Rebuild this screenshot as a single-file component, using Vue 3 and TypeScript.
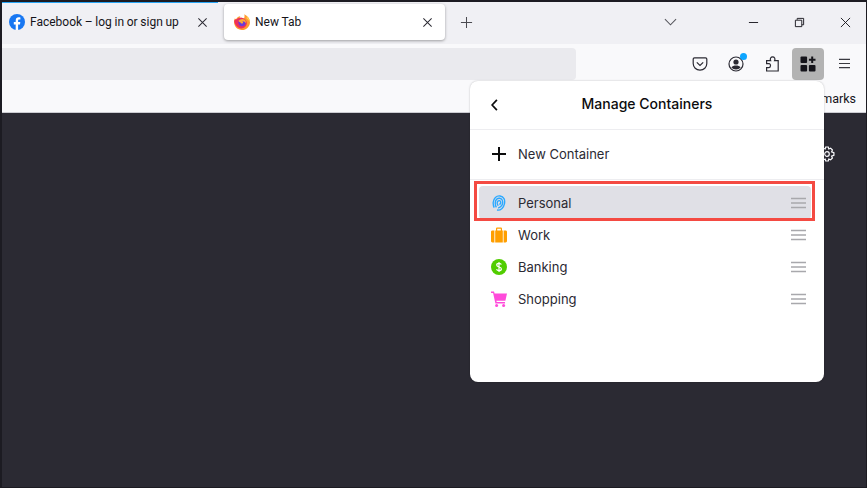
<script setup lang="ts">
/** Data */
const containers = [
    { name: 'Personal', icon: 'fingerprint', active: true },
    { name: 'Work', icon: 'briefcase', active: false },
    { name: 'Banking', icon: 'dollar', active: false },
    { name: 'Shopping', icon: 'cart', active: false }
];
</script>

<template>
    <div class="window">
        <div class="tab-bar">
            <div class="progress"></div>
            <div class="tab">
                <svg class="favicon" viewBox="0 0 16 16">
                    <circle cx="8" cy="8" r="8" fill="#1877f2" />
                    <path d="M6.7 16V10.4H4.8V8H6.7V6.4C6.7 4.4 7.9 3.3 9.7 3.3C10.5 3.3 11.2 3.4 11.4 3.5V5.5H10.3C9.3 5.5 9.1 6 9.1 6.7V8H11.3L11 10.4H9.1V16Z" fill="#fff" />
                </svg>
                <span class="tab-title">Facebook – log in or sign up</span>
                <svg class="tab-close" viewBox="0 0 12 12"><path d="M1.5 1.5L10.5 10.5M10.5 1.5L1.5 10.5" /></svg>
            </div>
            <div class="tab tab-active">
                <svg class="favicon" viewBox="0 0 16 16">
                    <path d="M10.2 0.3C13.8 1.8 16 4.8 16 8.2C16 12.4 12.4 16 8 16C3.6 16 0 12.4 0 8C0 6.6 0.3 5.2 1 4.2C1.2 5 1.6 5.4 2 5.6C2.6 3.6 4.4 2.2 6.4 2.2C5.8 2.8 5.6 3.4 5.7 4C7.2 3.6 8.8 3.8 10 4.6C10.6 3 10.8 1.6 10.2 0.3Z" fill="#ff9a2e" />
                    <path d="M0.2 7C0.8 5.6 1.6 5.2 2.4 5.4C3.4 4.2 6 3.4 8.6 4C11.4 4.6 13 7 12.8 9.6C12.5 12.4 10 14.6 7.2 14.4C3.6 14.2 0.6 11 0.2 7Z" fill="#ed2f5b" />
                    <circle cx="8" cy="8.6" r="3.6" fill="#6a3bd6" />
                    <path d="M4.4 7C5.6 5 8.6 4.4 10.6 5.6C11.8 6.4 12.2 8 11.8 9.2C11.2 7.8 9.8 7 8.2 7.2C9.2 7.6 9.4 8.6 8.8 9.2C8 9.8 6.8 9.4 6.6 8.4C6 8.2 5 7.8 4.4 7Z" fill="#ffa930" />
                    <path d="M12.6 2.2C14.6 3.6 15.8 5.8 15.7 8.2C14.9 6.2 13.8 5 12.4 4.2C12.8 3.6 12.8 2.8 12.6 2.2Z" fill="#ffd34d" />
                </svg>
                <span class="tab-title">New Tab</span>
                <svg class="tab-close" viewBox="0 0 12 12"><path d="M1.5 1.5L10.5 10.5M10.5 1.5L1.5 10.5" /></svg>
            </div>
            <svg class="new-tab" viewBox="0 0 14 14"><path d="M7 1V13M1 7H13" /></svg>
            <div class="tab-bar-right">
                <svg class="tab-list" viewBox="0 0 14 8"><path d="M1 1L7 7L13 1" /></svg>
                <div class="window-controls">
                    <svg class="window-button" viewBox="0 0 12 12"><path d="M1 6H11" /></svg>
                    <svg class="window-button" viewBox="0 0 12 12"><path d="M3.5 3V1.5H10.5V8.5H8.5M1.5 3.5H8.5V10.5H1.5Z" /></svg>
                    <svg class="window-button" viewBox="0 0 12 12"><path d="M1 1L11 11M11 1L1 11" /></svg>
                </div>
            </div>
        </div>

        <div class="toolbar">
            <div class="url-bar"></div>
            <div class="toolbar-icons">
                <svg class="tool" viewBox="0 0 16 16">
                    <path d="M2.5 1.8H13.5C14.3 1.8 14.8 2.4 14.8 3.1V7.4C14.8 11.2 11.8 14.2 8 14.2C4.2 14.2 1.2 11.2 1.2 7.4V3.1C1.2 2.4 1.7 1.8 2.5 1.8Z" />
                    <path d="M4.8 6.4L8 9.4L11.2 6.4" />
                </svg>
                <div class="account">
                    <svg class="tool" viewBox="0 0 16 16">
                        <circle cx="8" cy="8" r="7" />
                        <circle class="solid" cx="8" cy="6" r="2.6" />
                        <path class="solid" d="M3.4 11.6C4.4 10 6 9.6 8 9.6C10 9.6 11.6 10 12.6 11.6C11.4 12.9 9.8 13.6 8 13.6C6.2 13.6 4.6 12.9 3.4 11.6Z" />
                    </svg>
                    <span class="account-dot"></span>
                </div>
                <svg class="tool puzzle" viewBox="0 0 16 16">
                    <path d="M6.6 4.6C5.6 2.6 7 0.8 8.6 0.8C10.4 0.8 11.6 2.6 10.6 4.6H14.2V15H2.6V11.6H5C7 11.6 7 7.6 5 7.6H2.6V4.6Z" />
                </svg>
                <div class="containers-button">
                    <svg class="containers-icon" viewBox="0 0 16 16">
                        <rect x="0.5" y="0.5" width="6.6" height="6.6" rx="1" />
                        <rect x="0.5" y="8.9" width="6.6" height="6.6" rx="1" />
                        <rect x="8.9" y="8.9" width="6.6" height="6.6" rx="1" />
                        <path d="M11.2 0.5H13.2V2.8H15.5V4.8H13.2V7.1H11.2V4.8H8.9V2.8H11.2Z" />
                    </svg>
                </div>
                <svg class="menu-icon" viewBox="0 0 14 12"><path d="M1 1.5H13M1 6H13M1 10.5H13" /></svg>
            </div>
        </div>

        <div class="bookmarks">
            <span class="bookmarks-text">marks</span>
        </div>

        <div class="content">
            <svg class="gear" viewBox="0 0 16 16">
                <path d="M6.7 1H9.3L9.8 3L11.6 2.2L13.4 4L12.6 5.9L14.9 6.6V9.4L12.6 10.1L13.4 12L11.6 13.8L9.8 13L9.3 15H6.7L6.2 13L4.4 13.8L2.6 12L3.4 10.1L1.1 9.4V6.6L3.4 5.9L2.6 4L4.4 2.2L6.2 3Z" />
                <circle cx="8" cy="8" r="2.3" />
            </svg>
        </div>

        <div class="panel">
            <div class="panel-header">
                <svg class="back" viewBox="0 0 8 14"><path d="M6.8 1L1.2 7L6.8 13" /></svg>
                <span class="panel-title">Manage Containers</span>
            </div>
            <div class="new-container">
                <svg class="plus" viewBox="0 0 14 14"><path d="M7 0V14M0 7H14" /></svg>
                <span>New Container</span>
            </div>
            <div class="list">
                <div v-for="item in containers" :key="item.name" class="row" :class="{ active: item.active }">
                    <svg class="row-icon" viewBox="0 0 16 16">
                        <g v-if="item.icon === 'fingerprint'" fill="none" stroke="#2aa8ff" stroke-width="1.35">
                            <path d="M3.2 12.6C1.6 9.4 1.8 4.8 4.4 2.4C7 0 11.4 0.6 13 3.6C14.4 6.4 13.6 11 11 13.4C9.8 14.5 8 15.4 6 15" />
                            <path d="M5.4 12.4C3.8 10 3.8 6 5.6 4.2C7.4 2.6 10.2 3 11.2 5C12 7 11.4 10 9.8 11.6C9 12.4 8 12.9 7 12.8" />
                            <path d="M7.4 10.6C6 9.6 5.8 7.4 6.8 6.2C7.8 5.2 9.2 5.6 9.6 6.8C10 8 9.4 9.6 8.2 8.8" />
                        </g>
                        <path v-else-if="item.icon === 'briefcase'" fill="#ff9f00" fill-rule="evenodd" d="M5 3.4V1.8C5 1 5.6 0.5 6.3 0.5H9.7C10.4 0.5 11 1 11 1.8V3.4H14.6C15.4 3.4 16 4 16 4.8V14C16 14.8 15.4 15.4 14.6 15.4H1.4C0.6 15.4 0 14.8 0 14V4.8C0 4 0.6 3.4 1.4 3.4ZM6.2 1.7V3.4H9.8V1.7ZM3.4 3.4V15.4H4.2V3.4ZM11.8 3.4V15.4H12.6V3.4Z" />
                        <g v-else-if="item.icon === 'dollar'">
                            <circle cx="8" cy="8" r="8" fill="#51cd00" />
                            <path d="M10.4 5.6C10 4.8 9 4.4 8 4.4C6.7 4.4 5.7 5 5.7 6.1C5.7 8.6 10.4 7.4 10.4 9.9C10.4 11 9.3 11.6 8 11.6C6.9 11.6 5.9 11.2 5.5 10.3M8 3V13" fill="none" stroke="#fff" stroke-width="1.2" />
                        </g>
                        <g v-else fill="#ff4bda">
                            <path d="M0 0.6H3L3.6 2.6H16L14.4 9.8H5.4L5.7 11H14V12.4H4.4L2.1 2H0Z" />
                            <circle cx="5.6" cy="14.4" r="1.5" />
                            <circle cx="12.6" cy="14.4" r="1.5" />
                        </g>
                    </svg>
                    <span class="row-name">{{ item.name }}</span>
                    <svg class="drag" viewBox="0 0 15 12"><path d="M0 1.5H15M0 6H15M0 10.5H15" /></svg>
                </div>
            </div>
            <div class="highlight"></div>
        </div>
    </div>
</template>

<style scoped>
.window {
    position: relative;
    width: 867px;
    height: 488px;
    box-sizing: border-box;
    display: flex;
    flex-direction: column;
    border-style: solid;
    border-color: #1c1b22;
    border-width: 2px 1px 1px 2px;
    overflow: hidden;
    font-family: "Inter", "Liberation Sans", sans-serif;
    color: #15141a;
    font-size: 13px;
}

.tab-bar {
    position: relative;
    display: flex;
    align-items: center;
    height: 42px;
    box-sizing: border-box;
    padding-bottom: 2px;
    background-color: #f0f0f4;
    flex-shrink: 0;
}

.progress {
    position: absolute;
    top: 0;
    left: 0;
    width: 216px;
    height: 1px;
    background-color: #2aa6f5;
}

.tab {
    width: 222px;
    height: 36px;
    box-sizing: border-box;
    display: flex;
    align-items: center;
    padding: 0 6px 0 7px;
    border-radius: 4px;
    flex-shrink: 0;
}

.tab-active {
    width: 221px;
    background-color: #fff;
    box-shadow: 0 1px 3px rgba(0, 0, 0, 0.35);
    padding: 0 11px 0 10px;
}

.favicon {
    width: 16px;
    height: 16px;
    flex-shrink: 0;
}

.tab-title {
    margin-left: 5px;
    flex: 1;
    font-family: "Roboto", "Liberation Sans", sans-serif;
    font-size: 12px;
    word-spacing: -0.3px;
    white-space: nowrap;
}

.tab-close {
    width: 11px;
    height: 11px;
    fill: none;
    stroke: #2b2a33;
    stroke-width: 1.1;
    margin-right: 10px;
}

.tab-active .tab-close {
    margin-right: 1px;
}

.new-tab {
    width: 13px;
    height: 13px;
    margin-left: 15px;
    fill: none;
    stroke: #4a4a50;
    stroke-width: 1.1;
}

.tab-bar-right {
    margin-left: auto;
    display: flex;
    align-items: center;
}

.tab-list {
    width: 13px;
    height: 8px;
    fill: none;
    stroke: #55555b;
    stroke-width: 1.1;
    margin-right: 71px;
}

.window-controls {
    display: flex;
    align-items: center;
    gap: 35px;
    padding-right: 15px;
}

.window-button {
    width: 11px;
    height: 11px;
    fill: none;
    stroke: #15141a;
    stroke-width: 1;
}

.toolbar {
    display: flex;
    align-items: center;
    height: 36px;
    background-color: #f9f9fb;
    flex-shrink: 0;
}

.url-bar {
    width: 574px;
    height: 32px;
    background-color: #eaeaee;
    margin-top: 4px;
    align-self: flex-start;
    border-radius: 0 4px 4px 0;
}

.toolbar-icons {
    flex: 1;
    display: flex;
    align-items: center;
    padding-left: 116px;
    margin-top: 3px;
}

.tool {
    width: 16px;
    height: 16px;
    fill: none;
    stroke: #2b2a33;
    stroke-width: 1.2;
    display: block;
}

.tool .solid {
    fill: #2b2a33;
    stroke: none;
}

.toolbar-icons > .tool:first-child {
    margin-right: 20px;
}

.account {
    position: relative;
    margin-right: 20px;
}

.account-dot {
    position: absolute;
    top: -3px;
    right: -3px;
    width: 7px;
    height: 7px;
    border-radius: 50%;
    background-color: #0ea5ff;
}

.containers-button {
    width: 32px;
    height: 32px;
    margin-left: 12px;
    border-radius: 4px;
    background-color: #b3b3b3;
    display: flex;
    align-items: center;
    justify-content: center;
}

.containers-icon {
    width: 16px;
    height: 16px;
    fill: #15141a;
}

.menu-icon {
    width: 13px;
    height: 11px;
    margin-left: 14px;
    fill: none;
    stroke: #3a3a40;
    stroke-width: 1.1;
}

.bookmarks {
    height: 33px;
    box-sizing: border-box;
    background-color: #f9f9fb;
    border-bottom: 1px solid #ccccd2;
    flex-shrink: 0;
    display: flex;
    align-items: center;
    justify-content: flex-end;
    padding-right: 10px;
    padding-top: 4px;
}

.bookmarks-text {
    font-family: "Roboto", "Liberation Sans", sans-serif;
    font-size: 12.5px;
}

.content {
    flex: 1;
    background-color: #2b2a33;
    display: flex;
    justify-content: flex-end;
    padding: 33px 31px 0 0;
}

.gear {
    width: 16px;
    height: 16px;
    fill: none;
    stroke: #fbfbfe;
    stroke-width: 1.2;
}

.panel {
    position: absolute;
    top: 79px;
    left: 468px;
    width: 354px;
    height: 301px;
    background-color: #fff;
    border-radius: 8px;
    box-shadow: 0 0 2px rgba(0, 0, 0, 0.25);
    display: flex;
    flex-direction: column;
}

.panel-header {
    position: relative;
    height: 49px;
    box-sizing: border-box;
    padding-bottom: 4px;
    border-bottom: 1px solid #ededf0;
    display: flex;
    align-items: center;
    justify-content: center;
    flex-shrink: 0;
}

.back {
    position: absolute;
    left: 21px;
    top: 18px;
    width: 7px;
    height: 12px;
    fill: none;
    stroke: #0c0c0d;
    stroke-width: 2;
}

.panel-title {
    font-size: 14px;
    font-weight: 500;
    color: #0c0c0d;
}

.new-container {
    height: 50px;
    box-sizing: border-box;
    padding-bottom: 2px;
    border-bottom: 1px solid #ededf0;
    display: flex;
    align-items: center;
    gap: 12px;
    padding-left: 22px;
    flex-shrink: 0;
    font-size: 13px;
    color: #2b2a33;
}

.plus {
    width: 14px;
    height: 14px;
    fill: none;
    stroke: #0c0c0d;
    stroke-width: 2;
}

.list {
    padding: 6px 13px 0 9px;
}

.row {
    height: 32px;
    display: flex;
    align-items: center;
    padding: 0 5px 0 12px;
    box-sizing: border-box;
}

.row.active {
    height: 33px;
    border-radius: 4px;
    background-color: #e0e0e6;
}

.row-icon {
    width: 16px;
    height: 16px;
    flex-shrink: 0;
}

.row-name {
    margin-left: 11px;
    flex: 1;
    font-size: 13px;
    color: #2b2a33;
}

.drag {
    width: 15px;
    height: 12px;
    fill: none;
    stroke: #a8a8ac;
    stroke-width: 1.4;
}

.highlight {
    position: absolute;
    left: 4px;
    top: 100px;
    width: 341px;
    height: 40px;
    box-sizing: border-box;
    border: 3px solid #f44a42;
    pointer-events: none;
}
</style>

<style>
html,
body {
    margin: 0;
    background: #2b2a33;
}
</style>
